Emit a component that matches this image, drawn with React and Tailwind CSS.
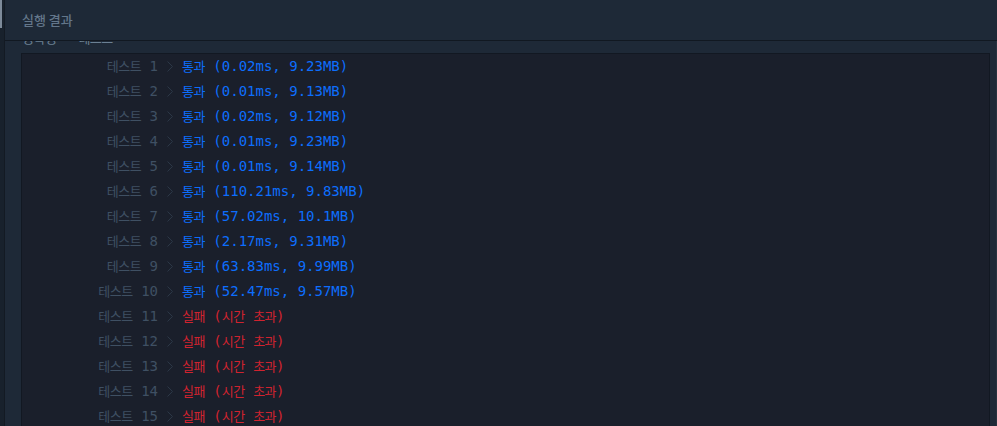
import React from 'react';

const ROWS = [
    { n: 1, ok: true, text: '(0.02ms, 9.23MB)' },
    { n: 2, ok: true, text: '(0.01ms, 9.13MB)' },
    { n: 3, ok: true, text: '(0.02ms, 9.12MB)' },
    { n: 4, ok: true, text: '(0.01ms, 9.23MB)' },
    { n: 5, ok: true, text: '(0.01ms, 9.14MB)' },
    { n: 6, ok: true, text: '(110.21ms, 9.83MB)' },
    { n: 7, ok: true, text: '(57.02ms, 10.1MB)' },
    { n: 8, ok: true, text: '(2.17ms, 9.31MB)' },
    { n: 9, ok: true, text: '(63.83ms, 9.99MB)' },
    { n: 10, ok: true, text: '(52.47ms, 9.57MB)' },
    { n: 11, ok: false },
    { n: 12, ok: false },
    { n: 13, ok: false },
    { n: 14, ok: false },
    { n: 15, ok: false },
];

const mono = { fontFamily: '"DejaVu Sans Mono", "Noto Sans CJK KR", monospace' };

// korean glyphs come from the cjk fallback, sized to sit with the mono digits
function Ko({ children }) {
    return <span className="text-[13px] tracking-[-0.5px]">{children}</span>;
}

function Chevron() {
    return (
        <svg width="6" height="11" viewBox="0 0 6 11" className="shrink-0">
            <polyline points="0.5,0.5 5.5,5.5 0.5,10.5" fill="none" stroke="#2b3746" strokeWidth="1" />
        </svg>
    );
}

export default function App() {
    return (
        <div className="flex h-screen bg-[#1e2937] overflow-hidden" style={mono}>
            {/* left gutter with scroll thumb */}
            <div className="w-[5px] shrink-0 bg-[#18212c] border-r border-[#131a23] flex flex-col">
                <div className="w-[2px] h-[28px] bg-[#7d8a99]" />
            </div>

            <div className="flex-1 flex flex-col min-w-0">
                <div className="h-[41px] shrink-0 border-b border-[#111821] flex items-center pl-[17px]">
                    <span className="text-[13px] text-[#63768a] font-medium" style={{ fontFamily: '"Noto Sans CJK KR", sans-serif' }}>
                        실행 결과
                    </span>
                </div>

                <div className="flex-1 overflow-hidden pl-[16px] pr-[6px] border-r border-[#26323f]">
                    {/* heading scrolled up under the header */}
                    <div className="h-[12px] overflow-hidden">
                        <div className="-mt-[10px] leading-[16px] text-[13px] text-[#6b8093] pl-[1px] whitespace-pre">
                            <Ko>정확성</Ko><span className="ml-[22px]"><Ko>테스트</Ko></span>
                        </div>
                    </div>

                    <div className="bg-[#1a1f2b] border border-[#121822] text-[14px]">
                        {ROWS.map(r => (
                            <div key={r.n} className="flex items-center h-[25px] whitespace-pre">
                                <div className="w-[136px] text-right text-[#3f5063]">
                                    <Ko>테스트</Ko> {r.n}
                                </div>
                                <div className="w-[24px] flex justify-center">
                                    <Chevron />
                                </div>
                                {r.ok ? (
                                    <div className="text-[#0d6efd]">
                                        <Ko>통과</Ko> {r.text}
                                    </div>
                                ) : (
                                    <div className="text-[#d0232f]">
                                        <Ko>실패</Ko> (<Ko>시간</Ko> <Ko>초과</Ko>)
                                    </div>
                                )}
                            </div>
                        ))}
                    </div>
                </div>
            </div>
        </div>
    );
}
